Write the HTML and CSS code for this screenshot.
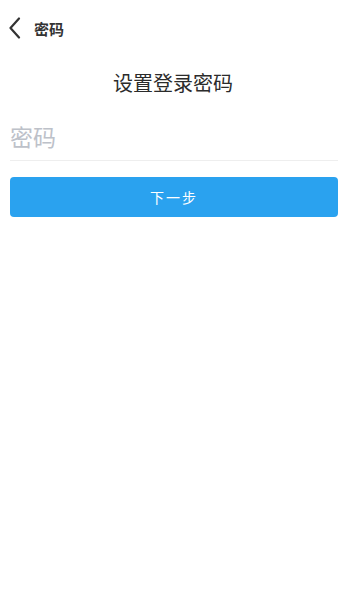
FILE: index.html
```html
<!DOCTYPE html>
<html lang="zh">
<head>
<meta charset="utf-8">
<link rel="stylesheet" href="styles.css">
</head>
<body>
<div class="page">
  <header class="nav">
    <svg class="back" width="14" height="22" viewBox="0 0 14 22"><path d="M11 1.5 L2.5 11 L11 20.5" fill="none" stroke="#333" stroke-width="2.2" stroke-linecap="round" stroke-linejoin="round"/></svg>
    <span class="nav-title">密码</span>
  </header>
  <h1 class="heading">设置登录密码</h1>
  <div class="field">
    <input class="input" type="password" placeholder="密码">
  </div>
  <button class="btn">下一步</button>
</div>
</body>
</html>
```
FILE: styles.css
```css
html, body {
  margin: 0;
  padding: 0;
  background: #fff;
  font-family: "Noto Sans CJK SC", "Noto Sans", sans-serif;
}
.page {
  display: flex;
  flex-direction: column;
  padding: 0 5px 0 10px;
}
.nav {
  display: flex;
  align-items: center;
  height: 56px;
  gap: 12px;
}
.back {
  display: block;
  margin-left: -2px;
}
.nav-title {
  font-size: 15px;
  font-weight: 700;
  color: #333;
}
.heading {
  margin: 13px 0 0;
  text-align: center;
  font-size: 20px;
  font-weight: 400;
  color: #2b2b2b;
  line-height: 28px;
  padding-right: 2px;
}
.field {
  margin-top: 14px;
  border-bottom: 1px solid #eeeeee;
  height: 49px;
  display: flex;
  align-items: center;
}
.input {
  border: none;
  outline: none;
  padding: 0;
  width: 100%;
  font-family: inherit;
  font-size: 23px;
  color: #333;
  background: transparent;
}
.input::placeholder {
  color: #bdc1c9;
}
.btn {
  margin-top: 16px;
  height: 40px;
  border: none;
  border-radius: 4px;
  background: #2aa2ef;
  color: #fff;
  font-family: inherit;
  font-size: 14px;
  letter-spacing: 2px;
  padding: 0;
}
```
